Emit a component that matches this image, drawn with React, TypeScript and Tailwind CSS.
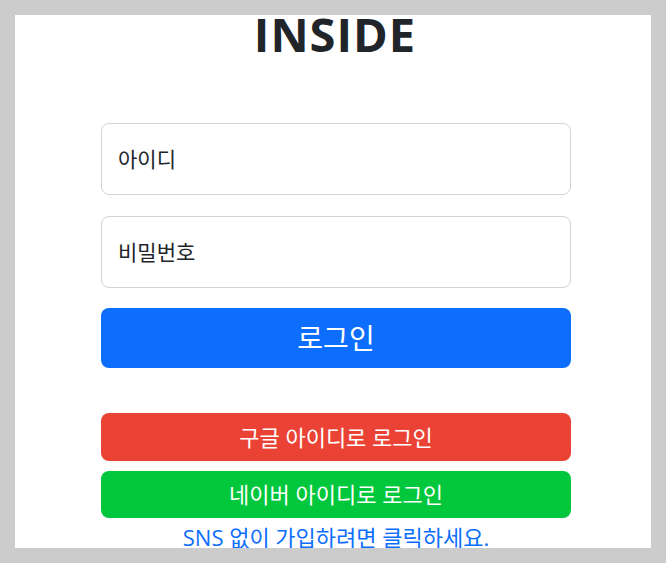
import React from "react";

const font = { fontFamily: '"Open Sans", "Noto Sans CJK KR", sans-serif' };

export default function App() {
  return (
    <div className="w-[666px] h-[563px] bg-[#cccccc] p-[15px]" style={font}>
      <div className="h-full w-full bg-white overflow-hidden">
        <div className="h-[50px] flex justify-center items-end">
          <h1 className="text-[47px] font-bold leading-none text-[#212529] tracking-[1px] mb-[7px] ml-[4px]">INSIDE</h1>
        </div>
        <div className="ml-[86px] w-[470px] mt-[58px] flex flex-col">
          <input
            className="h-[72px] w-full rounded-[8px] border border-[#ced4da] px-4 text-[21px] text-[#212529] placeholder:text-[#212529] outline-none"
            placeholder="아이디"
          />
          <input
            className="mt-[21px] h-[72px] w-full rounded-[8px] border border-[#ced4da] px-4 text-[21px] text-[#212529] placeholder:text-[#212529] outline-none"
            placeholder="비밀번호"
          />
          <button className="mt-[20px] h-[60px] w-full rounded-[8px] bg-[#0d6efd] text-white text-[28px]">로그인</button>
          <button className="mt-[45px] h-[48px] w-full rounded-[8px] bg-[#ea4335] text-white text-[22px]">구글 아이디로 로그인</button>
          <button className="mt-[10px] h-[47px] w-full rounded-[8px] bg-[#00c73c] text-white text-[22px]">네이버 아이디로 로그인</button>
          <div className="mt-[3px] text-center">
            <a className="text-[#0d6efd] text-[22px] leading-[32px]">SNS 없이 가입하려면 클릭하세요.</a>
          </div>
        </div>
      </div>
    </div>
  );
}
